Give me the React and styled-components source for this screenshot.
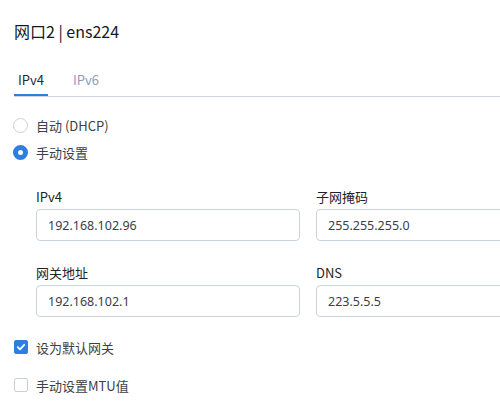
import React, { useState } from "react";
import styled, { createGlobalStyle } from "styled-components";

const GlobalStyle = createGlobalStyle`
  html, body {
    margin: 0;
    padding: 0;
    background: #ffffff;
    overflow: hidden;
  }
  body {
    font-family: "Noto Sans", "Noto Sans CJK SC", sans-serif;
    color: #333a44;
  }
`;

const Page = styled.div`
  padding: 20px 0 0 14px;
  width: 486px;
  height: 388px;
  overflow: hidden;
  font-size: 13px;
`;

const Title = styled.div`
  font-family: "Noto Sans CJK SC", sans-serif;
  font-size: 16px;
  line-height: 22px;
  font-weight: 400;
  color: #16191e;
`;

const TabBar = styled.div`
  margin-top: 26px;
  display: flex;
  gap: 21px;
  border-bottom: 1px solid #cdd6e1;
`;

const Tab = styled.div`
  font-family: "Noto Sans CJK SC", sans-serif;
  padding: 2px 4px 4px;
  line-height: 20px;
  font-size: 13px;
  color: ${(p) => (p.$active ? "#262b33" : "#8d9db6")};
  border-bottom: 2px solid ${(p) => (p.$active ? "#2e7de0" : "transparent")};
  cursor: pointer;
`;

const RadioGroup = styled.div`
  margin-top: 18px;
  display: flex;
  flex-direction: column;
  gap: 7px;
`;

const OptionRow = styled.label`
  display: flex;
  align-items: center;
  height: 20px;
  gap: 8px;
  font-family: "Noto Sans CJK SC", sans-serif;
  font-size: 13px;
  color: #3a4049;
  cursor: pointer;
`;

const RadioDot = styled.span`
  box-sizing: border-box;
  width: 15px;
  height: 15px;
  margin-left: -1px;
  border-radius: 50%;
  border: ${(p) => (p.$checked ? "5px solid #2e7de0" : "1px solid #c7d1dd")};
  background: #fff;
`;

const Fields = styled.div`
  margin-top: 26px;
  padding-left: 22px;
  display: grid;
  grid-template-columns: 264px 264px;
  column-gap: 16px;
  row-gap: 23px;
`;

const Field = styled.div`
  display: flex;
  flex-direction: column;
`;

const FieldLabel = styled.div`
  font-family: "Noto Sans CJK SC", sans-serif;
  font-size: 13px;
  line-height: 18px;
  font-weight: 400;
  color: #1f232a;
  margin-bottom: 3px;
`;

const Input = styled.input`
  box-sizing: border-box;
  height: 32px;
  width: 100%;
  padding: 0 11px;
  border: 1px solid #c9d4e1;
  border-radius: 4px;
  font-family: "Noto Sans", "Noto Sans CJK SC", sans-serif;
  font-size: 12.5px;
  color: #3a4049;
  outline: none;
  &:focus {
    border-color: #2e7de0;
  }
`;

const CheckGroup = styled.div`
  margin-top: 20px;
  display: flex;
  flex-direction: column;
  gap: 18px;
`;

const CheckBox = styled.span`
  box-sizing: border-box;
  width: 14px;
  height: 14px;
  border-radius: 2px;
  display: flex;
  align-items: center;
  justify-content: center;
  background: ${(p) => (p.$checked ? "#2e7de0" : "#fff")};
  border: 1px solid ${(p) => (p.$checked ? "#2e7de0" : "#c7d1dd")};
`;

const Check = () => (
  <svg width="10" height="10" viewBox="0 0 10 10">
    <path d="M1.8 5.2 L4 7.3 L8.2 2.8" fill="none" stroke="#fff" strokeWidth="1.8" strokeLinecap="round" strokeLinejoin="round" />
  </svg>
);

export default function App() {
  const [tab, setTab] = useState("v4");
  const [mode, setMode] = useState("manual");
  const [gw, setGw] = useState(true);
  const [mtu, setMtu] = useState(false);

  return (
    <Page>
      <GlobalStyle />
      <Title>网口2 | ens224</Title>
      <TabBar>
        <Tab $active={tab === "v4"} onClick={() => setTab("v4")}>IPv4</Tab>
        <Tab $active={tab === "v6"} onClick={() => setTab("v6")}>IPv6</Tab>
      </TabBar>

      <RadioGroup>
        <OptionRow onClick={() => setMode("dhcp")}>
          <RadioDot $checked={mode === "dhcp"} />
          自动 (DHCP)
        </OptionRow>
        <OptionRow onClick={() => setMode("manual")}>
          <RadioDot $checked={mode === "manual"} />
          手动设置
        </OptionRow>
      </RadioGroup>

      <Fields>
        <Field>
          <FieldLabel>IPv4</FieldLabel>
          <Input defaultValue="192.168.102.96" />
        </Field>
        <Field>
          <FieldLabel>子网掩码</FieldLabel>
          <Input defaultValue="255.255.255.0" />
        </Field>
        <Field>
          <FieldLabel>网关地址</FieldLabel>
          <Input defaultValue="192.168.102.1" />
        </Field>
        <Field>
          <FieldLabel>DNS</FieldLabel>
          <Input defaultValue="223.5.5.5" />
        </Field>
      </Fields>

      <CheckGroup>
        <OptionRow onClick={() => setGw(!gw)}>
          <CheckBox $checked={gw}>{gw && <Check />}</CheckBox>
          设为默认网关
        </OptionRow>
        <OptionRow onClick={() => setMtu(!mtu)}>
          <CheckBox $checked={mtu}>{mtu && <Check />}</CheckBox>
          手动设置MTU值
        </OptionRow>
      </CheckGroup>
    </Page>
  );
}
